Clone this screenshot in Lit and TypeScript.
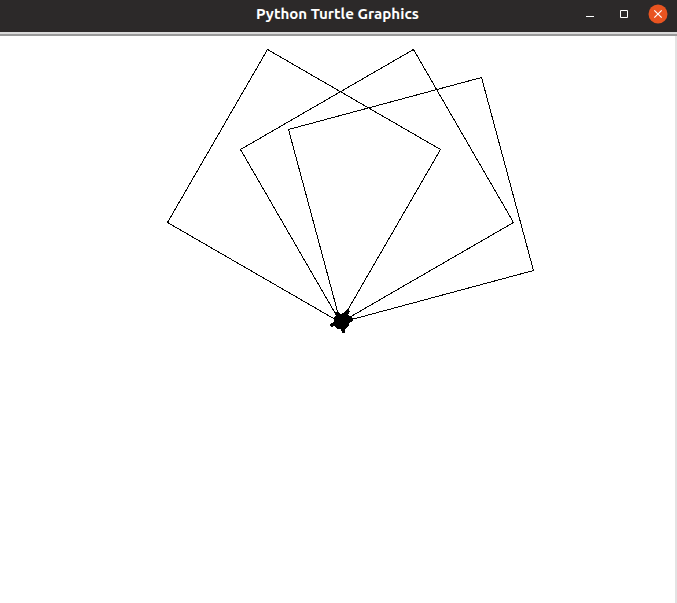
import { LitElement, html, css, svg } from "lit";
import { customElement } from "lit/decorators.js";

const ORIGIN = { x: 340.5, y: 286.5 };
const SIDE = 200;
const HEADINGS = [60, 30, 15];

/** Corner points of a square walked counter-clockwise from the origin. */
function square(heading: number): string {
  let { x, y } = ORIGIN;
  const points: string[] = [];
  for (let i = 0; i < 4; i++) {
    points.push(`${Math.floor(x) + 0.5},${Math.floor(y) + 0.5}`);
    const a = ((heading + i * 90) * Math.PI) / 180;
    x += SIDE * Math.cos(a);
    y -= SIDE * Math.sin(a);
  }
  return points.join(" ");
}

@customElement("title-bar")
class TitleBar extends LitElement {
  static styles = css`
    :host {
      display: grid;
      grid-template-columns: 1fr auto 1fr;
      align-items: center;
      height: 32px;
      padding-bottom: 4px;
      box-sizing: border-box;
      background: #2c2929;
      color: #fff;
      font: 700 14px/28px Ubuntu, "Noto Sans", sans-serif;
    }
    .title {
      grid-column: 2;
    }
    .title svg {
      display: block;
    }
    .controls {
      display: flex;
      justify-content: flex-end;
      gap: 14px;
      padding-right: 9px;
    }
    .controls svg {
      display: block;
      width: 20px;
      height: 20px;
    }
  `;
  render() {
    return html`
      <div class="title">
        <svg width="165" height="28">
          <text x="0" y="19" fill="#fff" textLength="163" lengthAdjust="spacingAndGlyphs">Python Turtle Graphics</text>
        </svg>
      </div>
      <div class="controls">
        <svg viewBox="0 0 20 20"><path d="M6 12.5h8" stroke="#fff" /></svg>
        <svg viewBox="0 0 20 20"><path d="M6.5 6.5h7v7h-7z" fill="none" stroke="#fff" /></svg>
        <svg viewBox="0 0 20 20">
          <circle cx="10" cy="10" r="9.5" fill="#e95420" />
          <path d="M6.3 6.3l7.4 7.4M13.7 6.3l-7.4 7.4" stroke="#fff" stroke-width="1.2" />
        </svg>
      </div>
    `;
  }
}

@customElement("app-root")
class AppRoot extends LitElement {
  static styles = css`
    :host {
      display: flex;
      flex-direction: column;
      height: 100vh;
      overflow: hidden;
      background: #fff;
    }
    .frame {
      flex: 1;
      min-height: 0;
      display: flex;
      flex-direction: column;
      border-top: 2px solid #d9d9d9;
    }
    .canvas {
      flex: 1;
      min-height: 0;
      border-top: 2px solid #999;
      display: flex;
    }
    .canvas svg {
      flex: 1;
      display: block;
      min-width: 0;
      height: 567px;
      border-right: 2px solid #e3e3e3;
    }
  `;
  render() {
    return html`
      <title-bar></title-bar>
      <div class="frame">
        <div class="canvas">
          <svg shape-rendering="crispEdges">
            ${HEADINGS.map((h) => svg`<polygon points=${square(h)} fill="none" stroke="#000" />`)}
            <polygon
              transform="translate(341 285)"
              points="-6,-9 -3,-10 -1,-7 3,-8 6,-12 9,-10 7,-6 9,-4 12,-3 12,0 9,1 8,4 4,8 4,12 1,12 0,8 -4,8 -6,5 -10,6 -11,3 -7,1 -7,-3 -5,-6"
            />
          </svg>
        </div>
      </div>
    `;
  }
}
